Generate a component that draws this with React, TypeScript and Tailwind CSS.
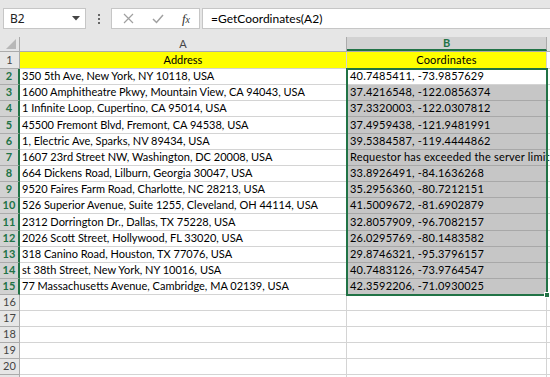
import React from "react";

const rows: { a: string; b: string; h: number }[] = [
  { a: "350 5th Ave, New York, NY 10118, USA", b: "40.7485411, -73.9857629", h: 16 },
  { a: "1600 Amphitheatre Pkwy, Mountain View, CA 94043, USA", b: "37.4216548, -122.0856374", h: 16 },
  { a: "1 Infinite Loop, Cupertino, CA 95014, USA", b: "37.3320003, -122.0307812", h: 16 },
  { a: "45500 Fremont Blvd, Fremont, CA 94538, USA", b: "37.4959438, -121.9481991", h: 17 },
  { a: "1, Electric Ave, Sparks, NV 89434, USA", b: "39.5384587, -119.4444862", h: 16 },
  { a: "1607 23rd Street NW, Washington, DC 20008, USA", b: "Requestor has exceeded the server limit", h: 16 },
  { a: "664 Dickens Road, Lilburn, Georgia 30047, USA", b: "33.8926491, -84.1636268", h: 16 },
  { a: "9520 Faires Farm Road, Charlotte, NC 28213, USA", b: "35.2956360, -80.7212151", h: 16 },
  { a: "526 Superior Avenue, Suite 1255, Cleveland, OH 44114, USA", b: "41.5009672, -81.6902879", h: 16 },
  { a: "2312 Dorrington Dr., Dallas, TX 75228, USA", b: "32.8057909, -96.7082157", h: 17 },
  { a: "2026 Scott Street, Hollywood, FL 33020, USA", b: "26.0295769, -80.1483582", h: 16 },
  { a: "318 Canino Road, Houston, TX 77076, USA", b: "29.8746321, -95.3796157", h: 16 },
  { a: "st 38th Street, New York, NY 10016, USA", b: "40.7483126, -73.9764547", h: 16 },
  { a: "77 Massachusetts Avenue, Cambridge, MA 02139, USA", b: "42.3592206, -71.0930025", h: 16 },
];

const cellFont = { fontFamily: "Lato, 'Liberation Sans', sans-serif" };

export default function App() {
  return (
    <div
      className="relative w-[550px] h-[377px] overflow-hidden bg-white text-black"
      style={cellFont}
    >
      {/* Formula bar */}
      <div className="h-[37px] bg-[#e6e6e6] flex items-start pt-[8px]">
        <div className="ml-[3px] w-[83px] h-[21px] bg-white border border-[#c6c6c6] flex items-center justify-between pl-[6px] pr-[5px]">
          <span className="text-[12px] text-[#222]" style={{ fontFamily: "'Noto Sans', sans-serif" }}>B2</span>
          <svg width="8" height="5" viewBox="0 0 8 5"><path d="M0 0 L8 0 L4 4.5 Z" fill="#444" /></svg>
        </div>
        <div className="w-[25px] h-[21px] flex flex-col items-center justify-center gap-[2px]">
          <span className="block w-[2px] h-[2px] bg-[#666]" />
          <span className="block w-[2px] h-[2px] bg-[#666]" />
          <span className="block w-[2px] h-[2px] bg-[#666]" />
        </div>
        <div className="w-[89px] h-[21px] bg-white border border-[#c6c6c6] flex items-center">
          <div className="w-[30px] flex justify-center ml-[1px]">
            <svg width="11" height="11" viewBox="0 0 11 11"><path d="M1 1 L10 10 M10 1 L1 10" stroke="#a0a0a0" strokeWidth="1.2" fill="none" /></svg>
          </div>
          <div className="w-[30px] flex justify-center">
            <svg width="12" height="10" viewBox="0 0 12 10"><path d="M1 5 L4.5 8.5 L11 1" stroke="#a0a0a0" strokeWidth="1.5" fill="none" /></svg>
          </div>
          <div className="w-[26px] flex justify-center">
            <span className="italic text-[13px] text-[#333] leading-none" style={{ fontFamily: "'Liberation Serif', serif" }}>
              f<span className="text-[10px]">x</span>
            </span>
          </div>
        </div>
        <div className="ml-[2px] flex-1 h-[21px] bg-white border border-[#c6c6c6] border-r-0 flex items-center pl-[8px]">
          <span className="text-[12px] text-black">=GetCoordinates(A2)</span>
        </div>
      </div>

      {/* Column headers */}
      <div className="flex h-[15px] bg-[#e6e6e6] border-b border-[#ababab]">
        <div className="w-[20px] h-full border-r border-[#ababab] flex items-end justify-end pr-[3px] pb-[2px]">
          <svg width="10" height="10" viewBox="0 0 10 10"><path d="M10 0 L10 10 L0 10 Z" fill="#b8b8b8" /></svg>
        </div>
        <div className="w-[327px] h-full border-r border-[#ababab] flex items-center justify-center text-[11px] text-[#444]">A</div>
        <div className="w-[200px] h-full bg-[#d2d2d2] border-r border-[#ababab] border-b-2 border-b-[#217346] flex items-center justify-center text-[11px] font-bold text-[#217346]">B</div>
        <div className="flex-1 h-full" />
      </div>

      {/* Row 1 */}
      <div className="flex h-[17px]">
        <div className="w-[20px] h-full bg-[#e6e6e6] border-r border-b border-[#ababab] flex items-center justify-center text-[11px] text-[#444]">1</div>
        <div className="w-[327px] h-full bg-[#ffff00] border-r border-b border-[#d4d4d4] flex items-center justify-center text-[11px]">Address</div>
        <div className="w-[200px] h-full bg-[#ffff00] border-r border-b border-[#d4d4d4] flex items-center justify-center text-[11px] tracking-[0.2px]">Coordinates</div>
        <div className="flex-1 h-full border-b border-[#d4d4d4]" />
      </div>

      {/* Data rows */}
      {rows.map((r, i) => (
        <div key={i} className="flex" style={{ height: r.h }}>
          <div className="w-[20px] h-full bg-[#d2d2d2] border-b border-[#ababab] border-r-2 border-r-[#217346] flex items-center justify-center text-[11px] font-bold text-[#217346]">
            {i + 2}
          </div>
          <div className="w-[327px] h-full border-r border-b border-[#d4d4d4] flex items-center pl-[2px] text-[11px] whitespace-nowrap overflow-hidden">
            {r.a}
          </div>
          <div
            className={
              i === 0
                ? "relative z-10 w-[200px] h-full bg-white border-r border-b border-[#d4d4d4] flex items-center pl-[3px] text-[11px] tracking-[0.2px] whitespace-nowrap"
                : "relative z-10 w-[200px] h-full bg-[#c6c6c6] border-r border-b border-[#a8a8a8] flex items-center pl-[3px] text-[11px] tracking-[0.2px] whitespace-nowrap"
            }
          >
            {r.b}
          </div>
          <div className="flex-1 h-full border-b border-[#d4d4d4]" />
        </div>
      ))}

      {/* Empty rows */}
      {[16, 17, 18, 19, 20].map((n) => (
        <div key={n} className="flex h-[16px]">
          <div className="w-[20px] h-full bg-[#e6e6e6] border-r border-b border-[#ababab] flex items-center justify-center text-[11px] text-[#444]">
            {n}
          </div>
          <div className="w-[327px] h-full border-r border-b border-[#d4d4d4]" />
          <div className="w-[200px] h-full border-r border-b border-[#d4d4d4]" />
          <div className="flex-1 h-full border-b border-[#d4d4d4]" />
        </div>
      ))}
      <div className="flex h-[16px]">
        <div className="w-[20px] h-full bg-[#e6e6e6] border-r border-[#ababab]" />
        <div className="w-[327px] h-full border-r border-[#d4d4d4]" />
        <div className="w-[200px] h-full border-r border-[#d4d4d4]" />
      </div>

      {/* Selection outline B2:B15 */}
      <div className="absolute left-[346px] top-[68px] w-[202px] h-[228px] border-2 border-[#217346] z-20 pointer-events-none" />
      {/* Fill handle */}
      <div className="absolute left-[544px] top-[292px] w-[6px] h-[6px] bg-[#217346] border border-white z-30" />
    </div>
  );
}
